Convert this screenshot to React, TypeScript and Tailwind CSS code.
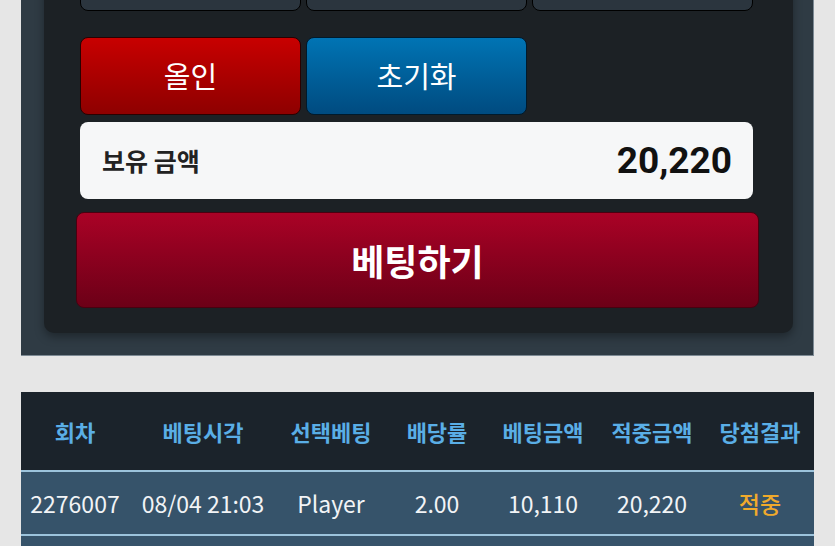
import React from 'react';

const headers = ['회차', '베팅시각', '선택베팅', '배당률', '베팅금액', '적중금액', '당첨결과'];
const row = ['2276007', '08/04 21:03', 'Player', '2.00', '10,110', '20,220', '적중'];
const cols = 'grid grid-cols-[108px_148px_108px_104px_108px_110px_106px]';

const App: React.FC = () => {
  return (
    <div
      className="h-[546px] overflow-hidden bg-[#e6e6e6]"
      style={{ fontFamily: '"Noto Sans CJK KR", "Noto Sans", sans-serif' }}
    >
      <div className="-mt-[67px] px-[21px]">
        <section className="border-r border-b border-[#7d8a94] bg-[#2f3b44] pl-[23px] pr-[20px] pb-[22px]">
          <div className="rounded-b-[10px] bg-[#1c2125] pl-[32px] pr-[34px] pb-[25px] shadow-[0_4px_10px_rgba(0,0,0,0.35)]">
            <div className="mx-[4px] mr-[6px] grid grid-cols-3 gap-[5px]">
              <div className="h-[78px] rounded-[8px] border border-black bg-[#2b353e]" />
              <div className="h-[78px] rounded-[8px] border border-black bg-[#2b353e]" />
              <div className="h-[78px] rounded-[8px] border border-black bg-[#2b353e]" />
            </div>

            <div className="mx-[4px] mr-[6px] mt-[26px] grid grid-cols-3 gap-[5px]">
              <button className="flex h-[78px] items-center justify-center rounded-[8px] border border-[#2a0000] bg-gradient-to-b from-[#c80000] to-[#8e0000] text-[29px] text-white">
                올인
              </button>
              <button className="flex h-[78px] items-center justify-center rounded-[8px] border border-[#001a2c] bg-gradient-to-b from-[#0074b4] to-[#004b80] text-[29px] text-white">
                초기화
              </button>
            </div>

            <div className="mx-[4px] mr-[6px] mt-[7px] flex h-[77px] items-center justify-between rounded-[8px] bg-[#f6f7f8] pl-[22px] pr-[21px]">
              <span className="text-[25px] font-bold text-[#222]">보유 금액</span>
              <span
                className="text-[37px] font-bold text-[#111]"
                style={{ fontFamily: 'Roboto, "Noto Sans CJK KR", sans-serif' }}
              >
                20,220
              </span>
            </div>

            <button className="mt-[13px] flex h-[96px] w-full items-center justify-center rounded-[8px] border border-[#4a0010] bg-gradient-to-b from-[#aa0226] to-[#6c0017] text-[36px] font-bold text-white">
              베팅하기
            </button>
          </div>
        </section>

        <section className="mt-[36px]">
          <div className={`${cols} h-[78px] items-center bg-[#1b232b] text-center text-[22px] font-bold text-[#5aaee6]`}>
            {headers.map((h) => (
              <div key={h}>{h}</div>
            ))}
          </div>
          <div className={`${cols} h-[66px] items-center border-y-2 border-[#9cc3dc] bg-[#36536a] text-center text-[23px] text-[#f2f4f6]`}>
            {row.map((c, i) => (
              <div key={i} className={i === 6 ? 'font-medium text-[#f0aa2c]' : ''}>
                {c}
              </div>
            ))}
          </div>
          <div className="h-[20px] bg-[#36536a]" />
        </section>
      </div>
    </div>
  );
};

export default App;
